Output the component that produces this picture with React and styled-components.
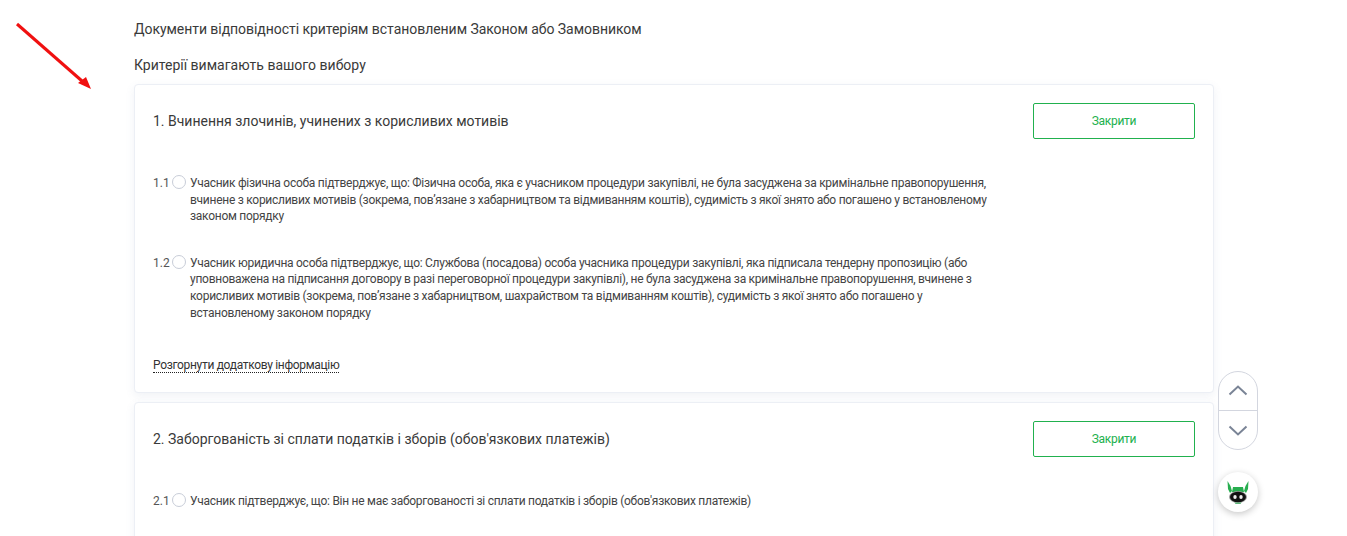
import React from 'react';
import styled, { createGlobalStyle } from 'styled-components';

const GlobalStyle = createGlobalStyle`
  html, body {
    margin: 0;
    height: 100%;
    overflow: hidden;
    background: #fff;
  }
  body {
    font-family: Roboto, "Liberation Sans", sans-serif;
    color: #333;
  }
`;

const Page = styled.div`
  position: relative;
  height: 536px;
  overflow: hidden;
  padding: 20px 0 0 134px;
  box-sizing: border-box;
`;

const Title = styled.div`
  font-size: 14px;
  line-height: 18px;
  letter-spacing: -0.05px;
  color: #3a3a3a;
`;

const Subtitle = styled(Title)`
  letter-spacing: 0;
  margin-top: 18px;
  margin-bottom: 10px;
`;

const Card = styled.section`
  width: 1080px;
  box-sizing: border-box;
  background: #fff;
  border: 1px solid #eceff5;
  border-radius: 4px;
  box-shadow: 0 3px 10px rgba(90, 110, 160, 0.09);
  padding: 18px 18px 19px;
  margin-bottom: 9px;
`;

const CardHead = styled.div`
  display: flex;
  align-items: center;
  justify-content: space-between;
  height: 36px;
  margin-bottom: 36px;
`;

const CardTitle = styled.h3`
  margin: 0;
  font-size: 14px;
  font-weight: 400;
  color: #3a3a3a;
`;

const CloseButton = styled.button`
  width: 162px;
  height: 36px;
  background: #fff;
  border: 1px solid #21b14e;
  border-radius: 2px;
  font: inherit;
  font-size: 12px;
  letter-spacing: -0.28px;
  color: #21b14e;
`;

const Criterion = styled.div`
  display: flex;
  align-items: flex-start;
  margin-bottom: 30px;
`;

const Num = styled.span`
  font-size: 12px;
  line-height: 16.6px;
  color: #555;
  width: 19px;
  flex: none;
`;

const Radio = styled.span`
  flex: none;
  width: 12px;
  height: 12px;
  margin-right: 4px;
  border: 1px solid #c8cdd8;
  border-radius: 50%;
`;

const CriterionText = styled.p`
  margin: 0;
  width: 808px;
  font-size: 12px;
  line-height: 16.6px;
  letter-spacing: -0.27px;
  color: #444;
`;

const MoreLink = styled.a`
  display: inline-block;
  margin-top: 7px;
  font-size: 12px;
  line-height: 14px;
  letter-spacing: -0.32px;
  color: #333;
  border-bottom: 1px dotted #222;
`;

const ScrollControl = styled.div`
  position: absolute;
  left: 1218px;
  top: 371px;
  width: 40px;
  height: 79px;
  box-sizing: border-box;
  background: #fff;
  border: 1px solid #d3d6df;
  border-radius: 20px;
  display: flex;
  flex-direction: column;
`;

const ScrollButton = styled.div`
  flex: 1;
  display: flex;
  align-items: center;
  justify-content: center;
  & + & {
    border-top: 1px solid #d3d6df;
  }
`;

const BotButton = styled.div`
  position: absolute;
  left: 1218px;
  top: 472px;
  width: 40px;
  height: 40px;
  border-radius: 50%;
  background: #fff;
  box-shadow: 0 2px 7px rgba(0, 0, 0, 0.22);
  display: flex;
  align-items: center;
  justify-content: center;
`;

const Arrow = styled.svg`
  position: absolute;
  left: 0;
  top: 0;
`;

const Chevron = ({ up }) => (
  <svg width="20" height="12" viewBox="0 0 20 12" fill="none">
    <path
      d={up ? 'M1.5 9.5 L10 1.5 L18.5 9.5' : 'M1.5 2.5 L10 10.5 L18.5 2.5'}
      stroke="#7a8496"
      strokeWidth="2"
    />
  </svg>
);

const Bot = () => (
  <svg width="24" height="26" viewBox="0 0 24 26">
    <path d="M1.5 2 L4.5 7 L6 12 L4 14 L2 10 Z" fill="#27ae4f" />
    <path d="M22.5 2 L19.5 7 L18 12 L20 14 L22 10 Z" fill="#27ae4f" />
    <path d="M7 8 H17 L18 13 H6 Z" fill="#27ae4f" />
    <ellipse cx="12" cy="18" rx="9" ry="6" fill="#9a9a9a" />
    <ellipse cx="12" cy="18" rx="8" ry="5.2" fill="#111" />
    <ellipse cx="9" cy="18" rx="1.7" ry="1.9" fill="#eee" />
    <ellipse cx="15" cy="18" rx="1.7" ry="1.9" fill="#eee" />
    <path d="M8.5 23.5 H15.5 L14.5 25 H9.5 Z" fill="#5fb67b" />
  </svg>
);

const groups = [
  {
    title: '1. Вчинення злочинів, учинених з корисливих мотивів',
    more: true,
    items: [
      [
        '1.1',
        'Учасник фізична особа підтверджує, що: Фізична особа, яка є учасником процедури закупівлі, не була засуджена за кримінальне правопорушення, вчинене з корисливих мотивів (зокрема, пов’язане з хабарництвом та відмиванням коштів), судимість з якої знято або погашено у встановленому законом порядку',
      ],
      [
        '1.2',
        'Учасник юридична особа підтверджує, що: Службова (посадова) особа учасника процедури закупівлі, яка підписала тендерну пропозицію (або уповноважена на підписання договору в разі переговорної процедури закупівлі), не була засуджена за кримінальне правопорушення, вчинене з корисливих мотивів (зокрема, пов’язане з хабарництвом, шахрайством та відмиванням коштів), судимість з якої знято або погашено у встановленому законом порядку',
      ],
    ],
  },
  {
    title: "2. Заборгованість зі сплати податків і зборів (обов'язкових платежів)",
    items: [
      [
        '2.1',
        "Учасник підтверджує, що: Він не має заборгованості зі сплати податків і зборів (обов'язкових платежів)",
      ],
    ],
  },
];

export default function App() {
  return (
    <>
      <GlobalStyle />
      <Page>
        <Arrow width="100" height="95" viewBox="0 0 100 95">
          <path d="M17 24 L82 81" stroke="#f01010" strokeWidth="3" />
          <path d="M91 89 L78 83 L86 77 Z" fill="#f01010" />
        </Arrow>
        <Title>Документи відповідності критеріям встановленим Законом або Замовником</Title>
        <Subtitle>Критерії вимагають вашого вибору</Subtitle>
        {groups.map((g) => (
          <Card key={g.title}>
            <CardHead>
              <CardTitle>{g.title}</CardTitle>
              <CloseButton>Закрити</CloseButton>
            </CardHead>
            {g.items.map(([num, text]) => (
              <Criterion key={num}>
                <Num>{num}</Num>
                <Radio />
                <CriterionText>{text}</CriterionText>
              </Criterion>
            ))}
            {g.more && <MoreLink>Розгорнути додаткову інформацію</MoreLink>}
          </Card>
        ))}
        <ScrollControl>
          <ScrollButton><Chevron up /></ScrollButton>
          <ScrollButton><Chevron /></ScrollButton>
        </ScrollControl>
        <BotButton><Bot /></BotButton>
      </Page>
    </>
  );
}
